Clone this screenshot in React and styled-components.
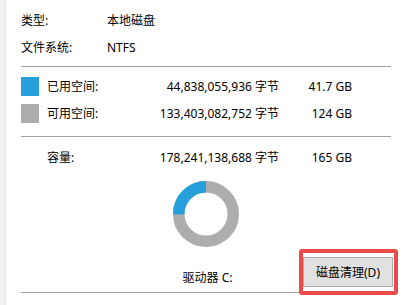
import React from 'react';
import styled, { createGlobalStyle } from 'styled-components';

const GlobalStyle = createGlobalStyle`
  html, body {
    margin: 0;
    padding: 0;
    background: #fff;
  }
  body {
    font-family: "Noto Sans", "Noto Sans CJK SC", sans-serif;
    font-size: 12px;
    color: #000;
  }
`;

const Page = styled.div`
  display: flex;
  width: 407px;
  height: 305px;
  overflow: hidden;
  background: #fff;
`;

const Strip = styled.div`
  width: 5px;
  flex: none;
  background: #f0f0f0;
  border-right: 1px solid #e3e3e3;
`;

const Panel = styled.div`
  flex: 1;
  padding: 7px 16px 0 15px;
  display: flex;
  flex-direction: column;
`;

const InfoRow = styled.div`
  display: grid;
  grid-template-columns: 86px 1fr;
  height: 27px;
  align-items: center;
  line-height: 14px;
`;

const Divider = styled.div`
  height: 1px;
  background: #a0a0a0;
  margin-top: ${({ $top }) => $top}px;
`;

const SpaceRow = styled.div`
  display: grid;
  grid-template-columns: 26px 80px 152px 73px;
  align-items: center;
  height: ${({ $h }) => $h || 19}px;
  line-height: 14px;
  margin-top: ${({ $top }) => $top}px;
`;

const Swatch = styled.div`
  width: 18px;
  height: 19px;
  background: ${({ $color }) => $color};
`;

const Right = styled.span`
  text-align: right;
  white-space: nowrap;
`;

const Chart = styled.div`
  display: flex;
  justify-content: center;
  margin-top: 16px;
  height: 66px;
`;

const DriveRow = styled.div`
  display: grid;
  grid-template-columns: 1fr auto 1fr;
  align-items: end;
  height: 30px;
  margin-top: 10px;
`;

const DriveLabel = styled.span`
  grid-column: 2;
  line-height: 14px;
  margin-bottom: 2px;
  margin-left: 3px;
`;

const ButtonWrap = styled.div`
  grid-column: 3;
  justify-self: end;
  position: relative;
  margin-right: -2px;
`;

const Button = styled.button`
  width: 90px;
  height: 30px;
  background: #e1e1e1;
  border: 1px solid #adadad;
  border-radius: 0;
  font-family: inherit;
  font-size: 12px;
  color: #000;
  padding: 0;
`;

const Highlight = styled.div`
  position: absolute;
  left: -4px;
  top: -8px;
  right: -5px;
  bottom: -8px;
  border: 4px solid #e94b4b;
  border-radius: 3px;
  pointer-events: none;
`;

const Donut = ({ used }) => {
  const cx = 33;
  const cy = 33;
  const r = 27.25;
  const a = Math.PI * 2 * used;
  // counter-clockwise from 12 o'clock
  const x = cx - r * Math.sin(a);
  const y = cy - r * Math.cos(a);
  const large = used > 0.5 ? 1 : 0;
  return (
    <svg width="66" height="66" viewBox="0 0 66 66">
      <circle cx={cx} cy={cy} r={r} fill="none" stroke="#adadad" strokeWidth="11.5" />
      <path
        d={`M ${cx} ${cy - r} A ${r} ${r} 0 ${large} 0 ${x} ${y}`}
        fill="none"
        stroke="#26a0da"
        strokeWidth="11.5"
      />
    </svg>
  );
};

export default function App() {
  return (
    <>
      <GlobalStyle />
      <Page>
        <Strip />
        <Panel>
          <InfoRow>
            <span>类型:</span>
            <span>本地磁盘</span>
          </InfoRow>
          <InfoRow>
            <span>文件系统:</span>
            <span>NTFS</span>
          </InfoRow>
          <Divider $top={5} />
          <SpaceRow $top={10}>
            <Swatch $color="#26a0da" />
            <span>已用空间:</span>
            <Right>44,838,055,936 字节</Right>
            <Right>41.7 GB</Right>
          </SpaceRow>
          <SpaceRow $top={8}>
            <Swatch $color="#adadad" />
            <span>可用空间:</span>
            <Right>133,403,082,752 字节</Right>
            <Right>124 GB</Right>
          </SpaceRow>
          <Divider $top={13} />
          <SpaceRow $top={14} $h={14}>
            <span />
            <span>容量:</span>
            <Right>178,241,138,688 字节</Right>
            <Right>165 GB</Right>
          </SpaceRow>
          <Chart>
            <Donut used={41.7 / 165} />
          </Chart>
          <DriveRow>
            <DriveLabel>驱动器 C:</DriveLabel>
            <ButtonWrap>
              <Button>磁盘清理(D)</Button>
              <Highlight />
            </ButtonWrap>
          </DriveRow>
          <Divider $top={5} />
        </Panel>
      </Page>
    </>
  );
}
